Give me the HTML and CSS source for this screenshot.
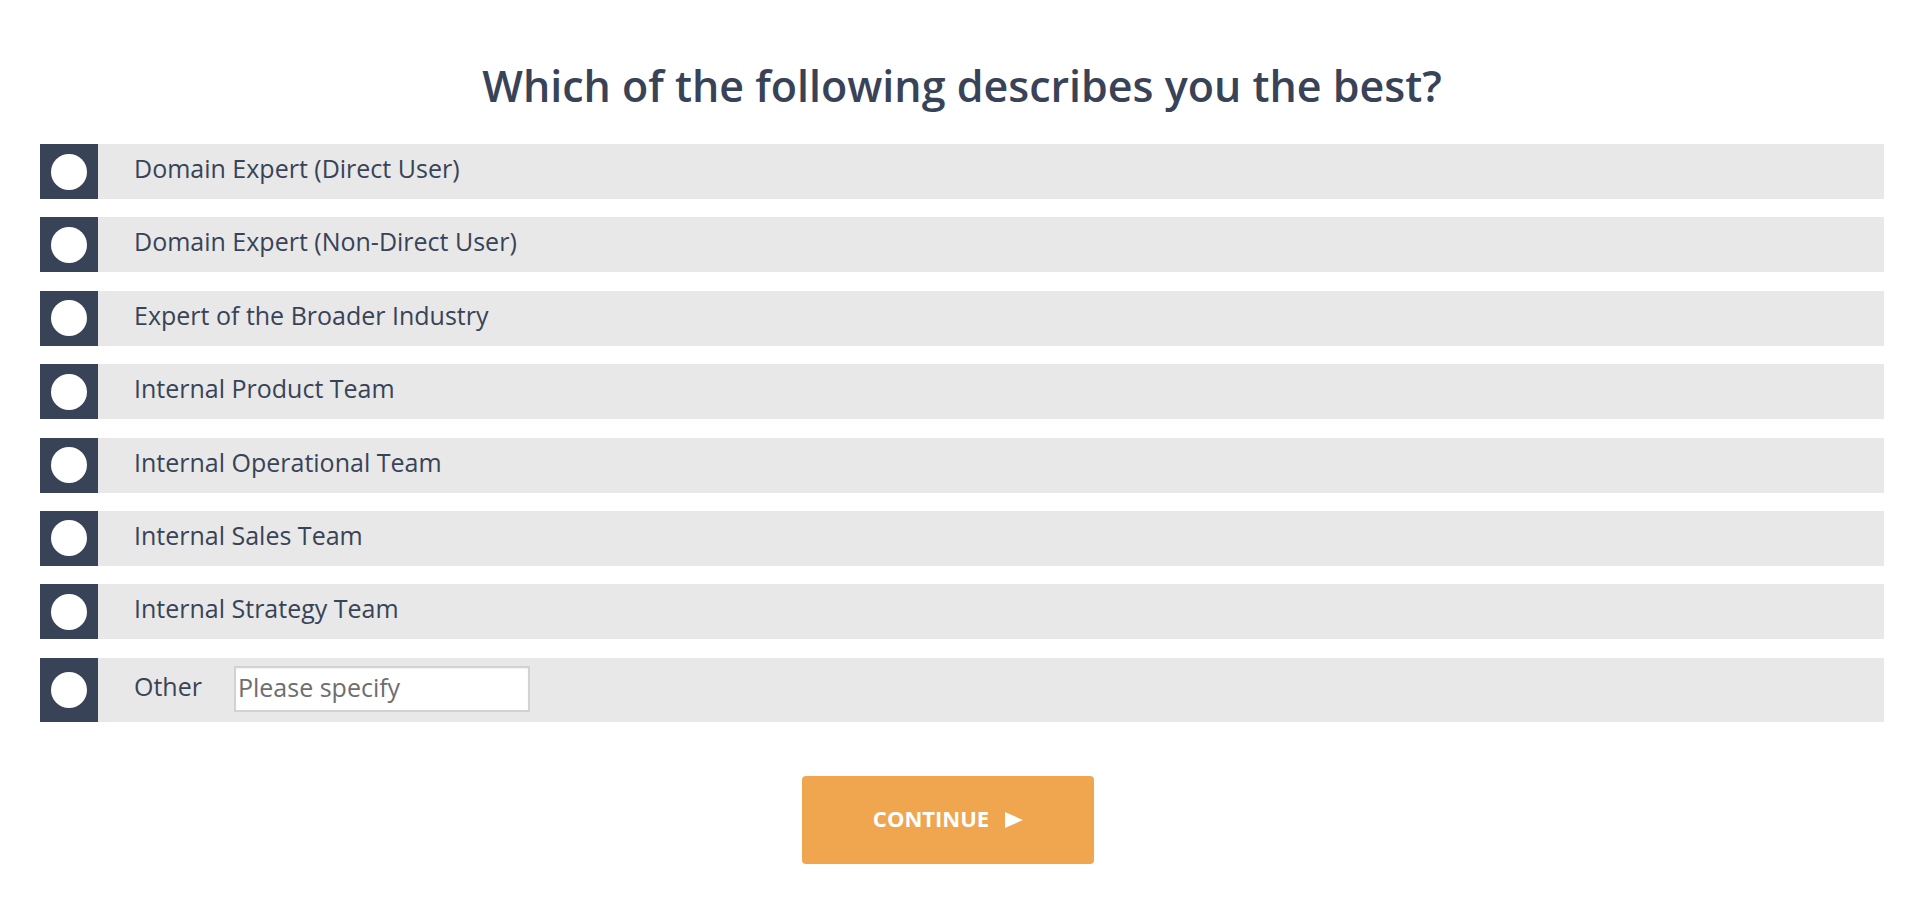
FILE: index.html
```html
<!DOCTYPE html>
<html lang="en">
<head>
<meta charset="utf-8">
<title>Which of the following describes you the best?</title>
<link rel="stylesheet" href="styles.css">
</head>
<body>
<main class="survey">
  <h1 class="question">Which of the following describes you the best?</h1>
  <div class="options">
    <label class="option"><span class="knob"><span class="dot"></span></span><span class="body">Domain Expert (Direct User)</span></label>
    <label class="option"><span class="knob"><span class="dot"></span></span><span class="body">Domain Expert (Non-Direct User)</span></label>
    <label class="option"><span class="knob"><span class="dot"></span></span><span class="body">Expert of the Broader Industry</span></label>
    <label class="option"><span class="knob"><span class="dot"></span></span><span class="body">Internal Product Team</span></label>
    <label class="option"><span class="knob"><span class="dot"></span></span><span class="body">Internal Operational Team</span></label>
    <label class="option"><span class="knob"><span class="dot"></span></span><span class="body">Internal Sales Team</span></label>
    <label class="option"><span class="knob"><span class="dot"></span></span><span class="body">Internal Strategy Team</span></label>
    <div class="option option-other"><span class="knob"><span class="dot"></span></span><span class="body body-other"><span class="other-label">Other</span><input class="specify" type="text" placeholder="Please specify"></span></div>
  </div>
  <div class="actions">
    <button class="continue" type="button">CONTINUE <span class="arrow"></span></button>
  </div>
</main>
</body>
</html>
```

FILE: styles.css
```css
html, body {
  margin: 0;
  padding: 0;
  background: #ffffff;
}

body {
  font-family: "Open Sans", "Liberation Sans", sans-serif;
  color: #394357;
}

.survey {
  padding: 56px 42px 0 40px;
}

.question {
  margin: 0 0 29px;
  font-size: 43px;
  font-weight: 600;
  line-height: normal;
  text-align: center;
  color: #394357;
}

.options {
  display: flex;
  flex-direction: column;
  gap: 18.4px;
}

.option {
  display: flex;
  align-items: stretch;
  background: #e8e8e8;
  min-height: 55px;
}

.knob {
  flex: 0 0 58px;
  display: flex;
  align-items: center;
  justify-content: center;
  background: #394357;
}

.dot {
  width: 36px;
  height: 36px;
  border-radius: 50%;
  background: #ffffff;
}

.body {
  padding: 7px 0 14px 36px;
  font-size: 25px;
  line-height: 34px;
  color: #394357;
}

.body-other {
  display: flex;
  align-items: flex-start;
  padding: 8px 0 10px 36px;
}

.other-label {
  margin-top: 3px;
  margin-right: 32px;
}

.specify {
  box-sizing: border-box;
  width: 296px;
  height: 46px;
  margin: 0;
  padding: 0 2px 3px;
  border: 2px solid #d2d2d2;
  border-radius: 0;
  background: #ffffff;
  box-shadow: inset 0 1px 2px rgba(0, 0, 0, 0.06);
  font-family: "Open Sans", "Liberation Sans", sans-serif;
  font-size: 25px;
  color: #394357;
  outline: none;
}

.specify::placeholder {
  color: #6e6e6e;
  opacity: 1;
}

.actions {
  display: flex;
  justify-content: center;
  padding: 54px 28px 0 0;
}

.continue {
  display: flex;
  align-items: center;
  gap: 16px;
  height: 88px;
  padding: 0 71px 3px;
  border: 0;
  border-radius: 4px;
  background: #efa64f;
  color: #ffffff;
  font-family: "Open Sans", "Liberation Sans", sans-serif;
  font-size: 22px;
  font-weight: 700;
  cursor: pointer;
}

.arrow {
  width: 0;
  height: 0;
  margin-top: 3px;
  border-top: 8px solid transparent;
  border-bottom: 8px solid transparent;
  border-left: 18px solid #ffffff;
}
```
